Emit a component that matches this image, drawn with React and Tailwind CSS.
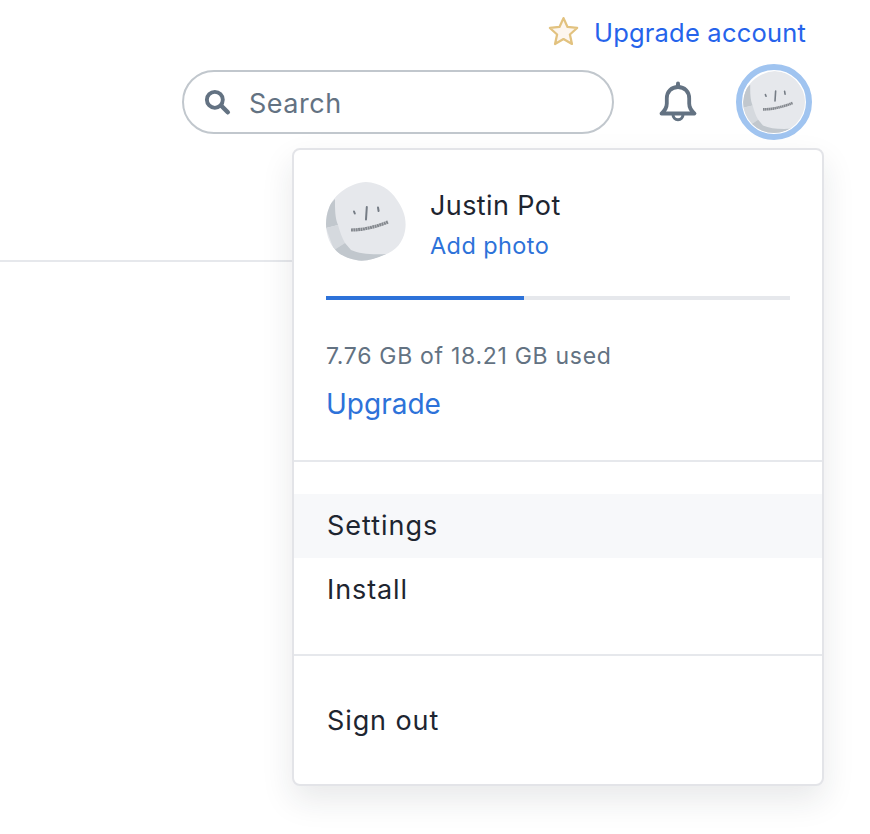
const font = { fontFamily: '"Inter", "Open Sans", sans-serif' };

function Avatar({ size, id }) {
  return (
    <svg width={size} height={size} viewBox="0 0 80 80" className="block">
      <defs>
        <clipPath id={id}>
          <path d="M40 0C54 1 64 7 71 18C78 28 81 38 79 49C77 60 70 69 58 73C49 77 38 80 30 78C18 76 8 70 3 58C-1 48 -1 36 3 26C8 12 24 1 40 0Z" />
        </clipPath>
      </defs>
      <g clipPath={`url(#${id})`}>
        <rect width="80" height="80" fill="#e6e8ec" />
        <path d="M0 46L0 26L9 17C9 28 9 36 12 43Z" fill="#c1c7cd" />
        <path d="M0 46L12 43C14 50 16 56 19 61L8 68Z" fill="#d5d9de" />
        <path d="M8 68L19 61L25 68C34 72 46 73 62 72L40 80L20 80Z" fill="#c1c7cd" />
      </g>
      <path d="M28 29.500l.8 2M40.800 25l-.8 12.500M52 25.500l.6 3.500" stroke="#757c85" strokeWidth="2" strokeLinecap="round" fill="none" />
      <path d="M25 48C36 48 50 45 62 40" stroke="#85898f" strokeWidth="3.200" strokeDasharray="2 .4" fill="none" />
    </svg>
  );
}

export default function App() {
  return (
    <div style={font} className="relative w-[870px] h-[834px] bg-white text-[#1e2530] overflow-hidden">
      <div className="flex flex-col items-end pt-[15px] pr-[64px]">
        <a className="flex items-center h-[36px] text-[25.500px] tracking-[0.2px] text-[#2563eb] whitespace-nowrap">
          <svg width="33" height="33" viewBox="0 0 32 32" className="mr-[14px] mt-[-3px]">
            <path d="M16 3l3.900 8.600 9.300 1-7 6.300 2 9.200-8.200-4.800-8.200 4.800 2-9.200-7-6.300 9.300-1z" fill="#fdf6ee" stroke="#e2c27f" strokeWidth="2.200" strokeLinejoin="round" />
          </svg>
          Upgrade account
        </a>
      </div>

      <div className="flex items-center mt-[13px] pl-[182px] h-[76px]">
        <div className="flex items-center w-[432px] h-[64px] rounded-[32px] border-2 border-[#c1c7cd] pl-[19px]">
          <svg width="28" height="28" viewBox="0 0 26 26" fill="none" stroke="#637282">
            <circle cx="11" cy="11" r="7.400" strokeWidth="3.600" />
            <path d="M17 16.500l6 6" strokeWidth="4.200" strokeLinecap="round" />
          </svg>
          <span className="ml-[18px] pt-[5px] text-[27px] tracking-[0.5px] text-[#637282]">Search</span>
        </div>
        <svg width="40" height="42" viewBox="0 0 40 42" fill="none" stroke="#637282" className="ml-[44px]">
          <path d="M20 2.500v3" strokeWidth="4" strokeLinecap="round" />
          <path d="M3.500 32.500c3-3 5.300-5 5.300-10v-5C8.800 10.500 13.500 6 20 6s11.200 4.500 11.200 11.500v5c0 5 2.300 7 5.300 10H3.500Z" strokeWidth="3.800" strokeLinejoin="round" />
          <path d="M15 33.500c0 3 2.200 5.200 5 5.200s5-2.200 5-5.200" strokeWidth="3" />
        </svg>
        <div className="ml-[38px] w-[76px] h-[76px] rounded-full border-[6px] border-[#a0c4f0] flex items-center justify-center">
          <div className="w-[62px] h-[62px] rounded-full overflow-hidden">
            <Avatar size={64} id="av-small" />
          </div>
        </div>
      </div>

      <div className="mt-[120px] w-[293px] h-[2px] bg-[#e6e8ec]" />

      <div className="absolute left-[292px] top-[148px] w-[532px] h-[638px] rounded-[8px] border-2 border-[#e3e4e8] bg-white shadow-[0_14px_32px_rgba(30,37,48,0.10)] flex flex-col">
        <div className="flex items-start pl-[32px] pt-[32px]">
          <Avatar size={80} id="av-large" />
          <div className="ml-[24px] pt-[6px]">
            <div className="text-[27px] tracking-[0.4px] leading-[36px]">Justin Pot</div>
            <div className="text-[23.500px] tracking-[0.4px] leading-[36px] mt-[4px] text-[#2d72d9]">Add photo</div>
          </div>
        </div>
        <div className="mx-[32px] mt-[32px] h-[4px] bg-[#e6e8ec]">
          <div className="w-[198px] h-full bg-[#2d72d9]" />
        </div>
        <div className="pl-[32px] mt-[38px] text-[23px] tracking-[0.7px] leading-[36px] text-[#637282]">7.76 GB of 18.21 GB used</div>
        <div className="pl-[32px] mt-[10px] text-[28px] leading-[40px] text-[#2d72d9]">Upgrade</div>
        <div className="mt-[36px] h-[2px] bg-[#e6e8ec]" />
        <div className="mt-[32px] h-[64px] bg-[#f7f8fa] pl-[33px] flex items-center text-[27px] tracking-[1px]">Settings</div>
        <div className="h-[64px] pl-[33px] flex items-center text-[27px] tracking-[0.9px]">Install</div>
        <div className="mt-[32px] h-[2px] bg-[#e6e8ec]" />
        <div className="mt-[33px] h-[64px] pl-[33px] flex items-center text-[27px] tracking-[0.9px]">Sign out</div>
      </div>
    </div>
  );
}
